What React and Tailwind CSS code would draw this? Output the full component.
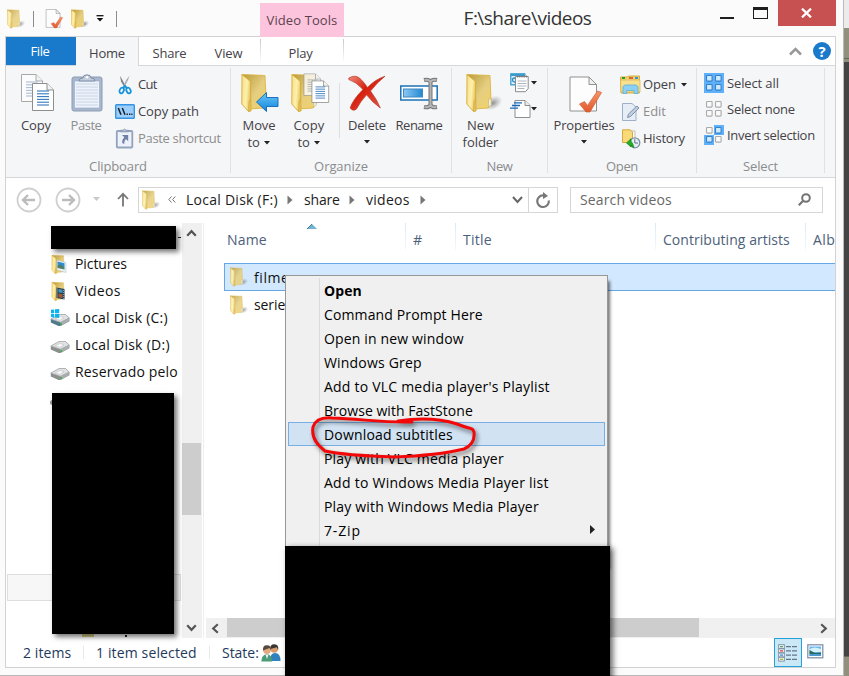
import React, { useLayoutEffect, useRef } from "react";

/* A single line of text whose tracking is adjusted to fill a given width. */
function Text({ w, className = "", children }) {
  const ref = useRef(null);
  useLayoutEffect(() => {
    const el = ref.current;
    el.style.letterSpacing = "0px";
    const natural = el.getBoundingClientRect().width;
    el.style.letterSpacing = (w + 0.8 - natural) / String(children).length + "px";
  }, [w, children]);
  return (
    <span ref={ref} className={"inline-block whitespace-pre " + className}>
      {children}
    </span>
  );
}

function Defs() {
  return (
    <svg className="absolute h-0 w-0">
      <defs>
        <linearGradient id="flap" x1="0" y1="0" x2="1" y2="0.3">
          <stop offset="0" stopColor="#f8df86" />
          <stop offset="0.6" stopColor="#fdf0ae" />
          <stop offset="1" stopColor="#e6c55a" />
        </linearGradient>
        <linearGradient id="back" x1="0" y1="0" x2="1" y2="1">
          <stop offset="0" stopColor="#b99a3c" />
          <stop offset="0.55" stopColor="#e5ce80" />
          <stop offset="1" stopColor="#f5d268" />
        </linearGradient>
        <linearGradient id="blueArrow" x1="0" y1="0" x2="0" y2="1">
          <stop offset="0" stopColor="#6cc8f8" />
          <stop offset="1" stopColor="#1184dc" />
        </linearGradient>
        <linearGradient id="redX" x1="0" y1="0" x2="1" y2="1">
          <stop offset="0" stopColor="#ee8a7c" />
          <stop offset="0.4" stopColor="#d61f0c" />
          <stop offset="1" stopColor="#e0604d" />
        </linearGradient>
        <linearGradient id="orange" x1="0" y1="0" x2="0" y2="1">
          <stop offset="0" stopColor="#f7966c" />
          <stop offset="1" stopColor="#e2592c" />
        </linearGradient>
        <linearGradient id="bar" x1="0" y1="0" x2="1" y2="0">
          <stop offset="0" stopColor="#8cc8f4" />
          <stop offset="1" stopColor="#2489d0" />
        </linearGradient>
        <radialGradient id="shade">
          <stop offset="0" stopColor="#777" stopOpacity="0.8" />
          <stop offset="1" stopColor="#999" stopOpacity="0" />
        </radialGradient>
      </defs>
    </svg>
  );
}

function FolderShape({ shadow = true }) {
  return (
    <>
      {shadow && <ellipse cx="27" cy="30" rx="10" ry="6.5" fill="url(#shade)" transform="rotate(-28 27 30)" />}
      <path d="M1 1.5 L24 2.5 L25.2 31 L22 35 L8 36 Z" fill="url(#back)" stroke="#d9ae35" strokeWidth="0.8" />
      <path d="M22.6 26 h2.6 v6 l-2.6 2.6 z" fill="#e8f2f5" stroke="#c7a64a" strokeWidth="0.5" />
      <path d="M1 1.5 L9.5 8.5 L10 38 L7.5 38.5 L0.8 31 Z" fill="url(#flap)" stroke="#d6aa35" strokeWidth="0.9" />
      <path d="M7.5 38.5 L8.2 28 L10 26" fill="none" stroke="#cda13a" strokeWidth="0.7" />
    </>
  );
}

const BigFolder = () => (
  <svg width="38" height="40" viewBox="0 0 38 40" className="ml-[6px]"><g transform="translate(1 0)"><FolderShape /></g></svg>
);

const SmallFolder = ({ strong = false }) => (
  <svg width="19" height="20" viewBox="0 0 38 40" className={strong ? "" : "opacity-85"}>
    <g transform="translate(0 0)"><FolderShape /></g>
  </svg>
);

function Page({ x = 0, y = 0, s = 1, pale = false }) {
  return (
    <g transform={`translate(${x} ${y}) scale(${s})`} opacity={pale ? 0.75 : 1}>
      <path d="M0.5 0.5 H15 L21.5 7 V27.5 H0.5 Z" fill="#fff" stroke="#8e8e8e" />
      <path d="M15 0.5 V7 H21.5" fill="#f3f3f3" stroke="#8e8e8e" />
      {[8, 10.8, 13.6, 16.4, 19.2, 22].map((l) => (
        <path key={l} d={`M5 ${l} H17`} stroke={pale ? "#91a8c8" : "#3579bd"} strokeWidth="1.1" />
      ))}
    </g>
  );
}

const CopyIcon = () => (
  <svg width="34" height="39" viewBox="0 0 34 39" className="ml-[3px]">
    <Page pale />
    <Page x={11} y={9} />
  </svg>
);

const PasteIcon = () => (
  <svg width="32" height="39" viewBox="0 0 32 39" className="ml-[2px]">
    <rect x="1" y="3" width="30" height="34" rx="2" fill="#a9b7cd" stroke="#8c9db8" />
    <rect x="3.5" y="7" width="25" height="27" fill="#edf3fb" stroke="#98a8c2" strokeWidth="0.6" />
    {[10, 13, 16, 19, 22, 25, 28, 31].map((y) => <path key={y} d={`M5 ${y} H27`} stroke="#c9d4e4" />)}
    <path d="M8 7 Q8 4 12 4 Q12 0.8 16 0.8 Q20 0.8 20 4 Q24 4 24 7 Z" fill="#c3ccda" stroke="#7f90ab" />
    <circle cx="16" cy="3.2" r="1.2" fill="#fff" />
  </svg>
);

const CutIcon = () => (
  <svg width="20" height="20" viewBox="0 0 20 20">
    <path d="M5 0.8 L7.5 5 L11.3 12 L9.8 13 L6 6.5 Z" fill="#7e8790" />
    <path d="M14.5 0.8 L13 5 L9 13 L7.7 12 L11.5 4.5 Z" fill="#a5adb5" />
    <ellipse cx="6.7" cy="15.5" rx="2" ry="2.9" transform="rotate(25 6.7 15.5)" fill="none" stroke="#1593dc" strokeWidth="1.8" />
    <ellipse cx="13.5" cy="15.5" rx="2" ry="2.9" transform="rotate(-25 13.5 15.5)" fill="none" stroke="#1593dc" strokeWidth="1.8" />
    <path d="M8 13.3 L10 10.8 L12.2 13.3" fill="none" stroke="#1593dc" strokeWidth="1.8" />
  </svg>
);

const PathIcon = () => (
  <svg width="20" height="15" viewBox="0 0 20 15">
    <rect x="0.7" y="0.7" width="18.6" height="13.6" rx="0.8" fill="#9bcefb" stroke="#3593e2" strokeWidth="1.4" />
    <path d="M3.3 4 L6 10.8 M7.3 4 L10 10.8" stroke="#17212c" strokeWidth="1.5" />
    <path d="M11.5 10.3 h1.4 M14 10.3 h1.4 M16.3 10.3 h1.2" stroke="#17212c" strokeWidth="1.5" />
  </svg>
);

const ShortcutIcon = () => (
  <svg width="20" height="21" viewBox="0 0 20 21">
    <rect x="1.8" y="3" width="15.5" height="16.5" rx="1" fill="#edf2fa" stroke="#93a3be" strokeWidth="1.8" />
    <path d="M5.5 3.8 V2.3 H8 Q9.5 0 11 2.3 H13.5 V3.8 Z" fill="#c2cada" stroke="#8797b1" />
    <path d="M7 7 H13.2 V13.2 L11 11 Q9 12.5 9.2 16 L7.2 15 Q6.8 11.5 9.3 9.2 Z" fill="#6e80a3" />
  </svg>
);

const MoveIcon = () => (
  <svg width="40" height="40" viewBox="0 0 40 40" className="ml-[2px]">
    <g transform="translate(1 0)"><FolderShape shadow={false} /></g>
    <path d="M16.5 29 L26.5 19.5 V24.5 H38 V33.5 H26.5 V38.5 Z" fill="url(#blueArrow)" stroke="#0f67b5" strokeWidth="0.9" />
  </svg>
);

const CopyToIcon = () => (
  <svg width="40" height="40" viewBox="0 0 40 40" className="ml-[2px]">
    <g transform="translate(1 0)"><FolderShape shadow={false} /></g>
    <Page x={13.5} y={0.5} s={0.8} pale />
    <Page x={21.5} y={7.5} s={0.8} />
  </svg>
);

const DeleteIcon = () => (
  <svg width="38" height="37" viewBox="0 0 38 37">
    <path d="M0.8 3 Q7 -0.5 11.5 3 Q16 7 19.5 12.5 Q27 4.5 37 1.2 Q29 7.5 22.5 16 Q29 24.5 32.3 33 Q24 27 18.5 19.8 Q12 27 8.5 34 Q5 36.8 2.2 33 Q4.5 25 15 14.5 Q8.5 7 0.8 4.5 Z" fill="url(#redX)" stroke="#bd3525" strokeWidth="0.7" />
  </svg>
);

const RenameIcon = () => (
  <svg width="39" height="33" viewBox="0 0 39 33">
    <rect x="0.8" y="9" width="36.4" height="14" fill="#fff" stroke="#1c71b5" strokeWidth="1.5" />
    <rect x="3.5" y="12" width="19" height="8" fill="url(#bar)" stroke="#3d89c8" />
    <path d="M24 3 Q29 2 30.5 5 Q32 2 37 3 M30.5 5 V28 M24 30 Q29 31 30.5 28 Q32 31 37 30" fill="none" stroke="#777" strokeWidth="4" />
    <path d="M24.5 3 Q29 2 30.5 5 Q32 2 36.5 3 M30.5 5 V28 M24.5 30 Q29 31 30.5 28 Q32 31 36.5 30" fill="none" stroke="#b5b5b5" strokeWidth="1.9" />
  </svg>
);

const NewItemIcon = () => (
  <svg width="20" height="20" viewBox="0 0 20 20">
    <rect x="0.8" y="0.8" width="14" height="11" fill="#d7effb" stroke="#3a9cd0" strokeWidth="1.3" />
    <path d="M1 2 H15" stroke="#3a9cd0" strokeWidth="2" />
    <circle cx="4.5" cy="7" r="2" fill="none" stroke="#2d8cc7" strokeWidth="1.3" />
    <path d="M5.5 3.5 H18.2 V15.5 L15.5 18.7 H5.5 Z" fill="#fff" stroke="#8a8a8a" />
    <path d="M7 3.5 H17" stroke="#777" strokeWidth="2.2" strokeDasharray="1.2 1" />
    <path d="M7.5 8 H16.5 M7.5 10.5 H16.5 M7.5 13 H16.5 M7.5 15.5 H14.5" stroke="#a6adb6" strokeWidth="0.9" />
  </svg>
);

const EasyIcon = () => (
  <svg width="21" height="20" viewBox="0 0 21 20">
    <path d="M5 1.5 H15 L20 6.5 V18.5 H5 Z" fill="#fff" stroke="#8e8e8e" />
    <path d="M15 1.5 V6.5 H20" fill="#eee" stroke="#8e8e8e" />
    <path d="M4 3.8 H12 M2 6.5 H10 M0 9.2 H8" stroke="#1268bd" strokeWidth="1.3" />
  </svg>
);

function PropertiesIcon({ width = 34, height = 38, className = "" }) {
  return (
    <svg width={width} height={height} viewBox="0 0 34 38" className={className}>
      <path d="M1 1 H20 L27.5 8.5 V35 H1 Z" fill="#fdfdfd" stroke="#919191" />
      <path d="M20 1 V8.5 H27.5 Z" fill="#eee" stroke="#919191" />
      <path d="M10.5 28 L15.5 25.5 L18.5 29.5 L28.5 15 L32.5 16.5 L21 36 L17 36 Z" fill="url(#orange)" stroke="#cd6037" strokeWidth="0.7" />
    </svg>
  );
}

const OpenIcon = () => (
  <svg width="21" height="20" viewBox="0 0 21 20">
    <path d="M0.5 2 H7 L9 1 H19.5 V18 H1 Z" fill="#f0d36d" stroke="#d5ae3e" />
    <path d="M2 3 H5" stroke="#2d9b33" strokeWidth="2" /><path d="M9 3 H13" stroke="#df6235" strokeWidth="2" /><path d="M15 3 H18" stroke="#2e9adb" strokeWidth="2" />
    <path d="M0.5 5 H20 V17 H1 Z" fill="#f7e08f" stroke="#dcb854" strokeWidth="0.8" />
    <path d="M3 11.5 L5 10 H16 L18 11.5 V18.5 H14.2 V15.5 H6.7 V18.5 H3 Z" fill="#8cd1f3" stroke="#5aaed6" strokeWidth="0.8" />
  </svg>
);

const EditIcon = () => (
  <svg width="20" height="20" viewBox="0 0 20 20">
    <path d="M2.5 1.5 H12 L16 5 V18.5 H2.5 Z" fill="#e6edf7" stroke="#a0afc9" />
    <path d="M7.5 15.5 L8.5 12 L17 4 L19 6 L10.5 14.5 Z" fill="#c2cddd" stroke="#7f91af" />
  </svg>
);

const HistoryIcon = () => (
  <svg width="20" height="20" viewBox="0 0 20 20" className="ml-[1px]">
    <path d="M5 2 H14 V10 H5 Z" fill="#fff" stroke="#bbb" />
    <path d="M1.5 0.8 H9 L11.5 3 V13.5 H1.5 Z" fill="#f9d978" stroke="#d5a93e" />
    <circle cx="13.8" cy="13.8" r="5" fill="#e5edf3" stroke="#7b91a3" strokeWidth="1.3" />
    <path d="M13.8 10.2 V14 H17" fill="none" stroke="#5d7385" />
    <path d="M5.5 14 L10 9.8 V12.2 Q12 14.5 13 18.5 Q10.5 17 10 16 V18 Z" fill="#24ae22" stroke="#12811a" strokeWidth="0.7" />
  </svg>
);

function SelectIcon({ blue }) {
  const cells = [[2, 2], [11, 2], [2, 11], [11, 11]];
  return (
    <svg width="20" height="20" viewBox="0 0 20 20">
      {blue.length === 4 && <rect width="20" height="20" fill="#5fb0fa" />}
      {cells.map(([x, y], i) => {
        const on = blue.includes(i);
        return (
          <g key={i}>
            {on && blue.length < 4 && <rect x={x < 5 ? 0 : 10} y={y < 5 ? 0 : 10} width="10" height="10" fill="#5fb0fa" />}
            <rect x={x + 0.5} y={y + 0.5} width="5.6" height="5.6" rx="0.8" fill={on ? "#cfeaff" : "#fafafa"} stroke={on ? "#3581c8" : "#aaa"} strokeWidth="1.1" />
          </g>
        );
      })}
    </svg>
  );
}

const Caret = ({ className = "" }) => (
  <svg width="6" height="4" viewBox="0 0 6 4" className={className}><path d="M0 0 H6 L3 3.6 Z" fill="#222" /></svg>
);

const Drive = ({ windows }) => (
  <svg width="20" height="18" viewBox="0 0 20 18" className="-ml-px">
    <path d="M0.8 10 L9 5.5 H15.5 L19.3 9 V12.2 L10.5 17 H8.5 L0.8 13.5 Z" fill={windows ? "#50798c" : "#8d8f8f"} />
    <path d="M0.8 10 L9 5.5 H15.5 L19.3 9 L10.5 13.3 Z" fill="#dfe1e2" stroke="#a4a7a8" strokeWidth="0.7" />
    <path d="M5 10 L10 7.5 L14 8.8 L10 11.3 Z" fill="#fafafa" stroke="#bbb" strokeWidth="0.5" />
    <path d="M10.5 13.3 L19.3 9 V12.2 L10.5 17 Z" fill="#a9adae" />
    <path d="M11.2 14.2 v1.7" stroke="#20b52b" strokeWidth="1.5" />
    {windows && <path d="M1 0.8 L4.2 0.4 V4 H1 Z M5 0.3 L9.2 0 V4 H5 Z M1 4.8 H4.2 V8.4 L1 8 Z M5 4.8 H9.2 V9 L5 8.5 Z" fill="#0bb3ef" />}
  </svg>
);

function MediaFolder({ kind }) {
  return (
    <svg width="19" height="20" viewBox="0 0 38 40">
      <g transform="translate(1 1)"><FolderShape shadow={false} /></g>
      {kind === "pictures" ? (
        <g><path d="M12 12 L30 17 V37 L12 32 Z" fill="#e7f4fc" stroke="#b1b8bc" /><path d="M13 15 L27 18.5 V28 L13 25 Z" fill="#2e8ed1" /><path d="M13 24 L20 21 L27 28 V31 L13 28 Z" fill="#557d64" /></g>
      ) : (
        <g><path d="M11 13 L27 16 V37 L11 34 Z" fill="#24415a" /><path d="M15 16 L23 17.5 V24 L15 22.5 Z" fill="#4398bf" /><path d="M15 25 L23 26.5 V34 L15 32.5 Z" fill="#a85b32" /><path d="M13 15 V33 M25 18 V36" stroke="#8e989c" strokeWidth="2" strokeDasharray="2 2" /></g>
      )}
    </svg>
  );
}

const Users = () => (
  <svg width="20" height="18" viewBox="0 0 20 18" className="-ml-px">
    <path d="M9 17 Q9 9 14 9 Q19.5 9 19.5 17 Z" fill="#2f82bd" />
    <circle cx="13.3" cy="5" r="3.7" fill="#d79b6b" />
    <path d="M9.3 5 Q9 0 13.5 0.2 Q18 0.5 17.2 6 L15.8 3.2 Z" fill="#393430" />
    <path d="M0.3 17.5 Q0.5 10.5 6 10 Q11 10.5 11.2 17.5 Z" fill="#4c9c78" />
    <path d="M4.5 10.5 L6 15 L7.5 10.5 Z" fill="#f4f4f4" />
    <circle cx="6" cy="6.2" r="3.8" fill="#e2ab80" />
    <path d="M2 6.5 Q1.5 1 6 1.2 Q10.5 1.3 10 6.5 L8.5 4 Z" fill="#57493e" />
  </svg>
);

function BigButton({ icon, children, className }) {
  return (
    <div className={"flex shrink-0 flex-col items-center pt-[3px] " + className}>
      <div className="mb-[2px] flex h-[44px] items-center justify-center">{icon}</div>
      {children}
    </div>
  );
}

function SmallButton({ icon, children }) {
  return (
    <div className="flex h-[27px] items-center">
      <div className="flex w-[23px] shrink-0 items-center">{icon}</div>
      {children}
    </div>
  );
}

function Group({ className, label, w, children }) {
  return (
    <section className={"flex h-[105px] shrink-0 flex-col border-r border-[#dfe1e3] " + className}>
      <div className="flex h-[88px] shrink-0">{children}</div>
      <div className="mt-[2px] flex h-[17px] shrink-0 items-center justify-center leading-[17px] text-[#8b8c8e]"><Text w={w}>{label}</Text></div>
    </section>
  );
}

const LINE = "leading-[17px]";

function Ribbon() {
  return (
    <div className="flex h-[112px] shrink-0 border-b border-[#d5d7d9] bg-[#f5f6f7] pt-[2px] text-[13px] text-[#444247]">
      <Group className="w-[225px]" label="Clipboard" w={57}>
        <BigButton className="ml-[4px] w-[52px]" icon={<CopyIcon />}><Text w={29} className={LINE}>Copy</Text></BigButton>
        <BigButton className="w-[48px]" icon={<PasteIcon />}><Text w={30} className={LINE + " text-[#8d8d8f]"}>Paste</Text></BigButton>
        <div className="ml-[5px] flex flex-col pt-[3px]">
          <SmallButton icon={<CutIcon />}><Text w={18}>Cut</Text></SmallButton>
          <SmallButton icon={<PathIcon />}><Text w={60}>Copy path</Text></SmallButton>
          <SmallButton icon={<ShortcutIcon />}><Text w={82} className="text-[#8d8d8f]">Paste shortcut</Text></SmallButton>
        </div>
      </Group>
      <Group className="w-[221px]" label="Organize" w={53}>
        <BigButton className="ml-[3px] w-[50px]" icon={<MoveIcon />}>
          <Text w={32} className={LINE}>Move</Text>
          <div className="flex items-center gap-[5px]"><Text w={11} className={LINE}>to</Text><Caret /></div>
        </BigButton>
        <BigButton className="w-[50px]" icon={<CopyToIcon />}>
          <Text w={30} className={LINE}>Copy</Text>
          <div className="flex items-center gap-[5px]"><Text w={11} className={LINE}>to</Text><Caret /></div>
        </BigButton>
        <div className="mt-[15px] ml-[5px] h-[55px] w-px bg-[#dcdee0]" />
        <BigButton className="ml-[2px] w-[50px]" icon={<DeleteIcon />}>
          <Text w={37} className={LINE}>Delete</Text><Caret className="mt-[6px]" />
        </BigButton>
        <BigButton className="w-[54px]" icon={<RenameIcon />}><Text w={46} className={LINE}>Rename</Text></BigButton>
      </Group>
      <Group className="w-[96px]" label="New" w={25}>
        <BigButton className="ml-[5px] w-[47px]" icon={<BigFolder />}>
          <Text w={26} className={LINE}>New</Text><Text w={35} className={LINE}>folder</Text>
        </BigButton>
        <div className="ml-[6px] flex flex-col gap-[6px] pt-[5px]">
          <div className="flex items-center gap-[2px]"><div className="w-5"><NewItemIcon /></div><Caret className="-ml-px" /></div>
          <div className="flex items-center gap-[2px]"><div className="w-5"><EasyIcon /></div><Caret className="-ml-px" /></div>
        </div>
      </Group>
      <Group className="w-[149px]" label="Open" w={31}>
        <BigButton className="ml-[3px] w-[66px]" icon={<PropertiesIcon className="mt-[3px] ml-[4px]" />}>
          <Text w={60} className={LINE}>Properties</Text><Caret className="mt-[6px]" />
        </BigButton>
        <div className="ml-[3px] flex flex-col pt-[3px]">
          <SmallButton icon={<OpenIcon />}><Text w={32}>Open</Text><Caret className="ml-[5px]" /></SmallButton>
          <SmallButton icon={<EditIcon />}><Text w={22} className="text-[#8d8d8f]">Edit</Text></SmallButton>
          <SmallButton icon={<HistoryIcon />}><Text w={41}>History</Text></SmallButton>
        </div>
      </Group>
      <Group className="w-[128px]" label="Select" w={34}>
        <div className="ml-[7px] flex flex-col gap-[6px] pt-[5px]">
          <div className="flex h-5 items-center gap-[3px]"><SelectIcon blue={[0, 1, 2, 3]} /><Text w={51} className="translate-y-px">Select all</Text></div>
          <div className="flex h-5 items-center gap-[3px]"><SelectIcon blue={[]} /><Text w={67} className="translate-y-px">Select none</Text></div>
          <div className="flex h-5 items-center gap-[3px]"><SelectIcon blue={[1, 2]} /><Text w={87} className="translate-y-px">Invert selection</Text></div>
        </div>
      </Group>
    </div>
  );
}

function TitleBar() {
  return (
    <header className="flex h-[36px] shrink-0 items-start">
      <div className="flex h-[36px] w-[254px] shrink-0 items-center pt-px pl-[1px]">
        <SmallFolder />
        <div className="ml-[7px] h-4 w-px bg-[#8c8c8c]" />
        <div className="ml-[11px]"><PropertiesIcon width={19} height={20} /></div>
        <div className="ml-[7px]"><SmallFolder strong /></div>
        <svg className="ml-[6px]" width="8" height="7" viewBox="0 0 8 7"><path d="M0.5 0.7 H7.5" stroke="#111" strokeWidth="1.3" /><path d="M0.8 3 H7.2 L4 6.5 Z" fill="#111" /></svg>
        <div className="ml-[12px] h-4 w-px bg-[#8c8c8c]" />
      </div>
      <div className="relative z-10 mt-[3px] flex h-[34px] w-[84px] shrink-0 items-center justify-center bg-[#fdc5dd] pt-px text-[13px] text-[#5b424d]"><Text w={70}>Video Tools</Text></div>
      <div className="flex h-[36px] w-[367px] shrink-0 items-center justify-center text-[19px] text-[#333]"><Text w={127}>{"F:\\share\\videos"}</Text></div>
      <div className="ml-[9px] h-[36px] w-[14px] shrink-0"><div className="mt-[17px] h-[2px] bg-[#1e1e1e]" /></div>
      <div className="mt-[7px] ml-[19px] h-[12px] w-[15px] shrink-0 border border-t-[3px] border-[#1e1e1e]" />
      <div className="ml-[10px] flex h-[26px] w-[58px] shrink-0 items-center justify-center bg-[#c75050] pr-[2px]">
        <svg width="11" height="10" viewBox="0 0 11 10"><path d="M1 0.6 L10 9.4 M10 0.6 L1 9.4" stroke="#fff" strokeWidth="2.2" /></svg>
      </div>
    </header>
  );
}

function Tabs() {
  return (
    <div className="flex h-[29px] shrink-0 items-end border-b border-[#d5d7d9] bg-white text-[13px] text-[#444247]">
      <div className="flex h-[28px] w-[70px] items-center justify-center bg-[#1979ca] pt-[2px] pr-[2px] text-white"><Text w={18}>File</Text></div>
      <div className="-mb-px flex h-[29px] w-[63px] items-center justify-center border-r border-[#d5d7d9] bg-[#f5f6f7] pt-[5px]"><Text w={35}>Home</Text></div>
      <div className="flex h-[28px] w-[61px] items-center justify-center pt-[6px]"><Text w={33}>Share</Text></div>
      <div className="flex h-[28px] w-[60px] items-center justify-center pt-[6px] pr-[3px]"><Text w={27}>View</Text></div>
      <div className="flex h-[28px] w-[84px] items-center">
        <div className="h-[24px] w-px bg-gradient-to-b from-[#c9c9c9] to-white" />
        <div className="flex grow justify-center pt-[6px] pr-[3px]"><Text w={23}>Play</Text></div>
        <div className="h-[24px] w-px bg-gradient-to-b from-[#c9c9c9] to-white" />
      </div>
      <div className="flex h-[28px] grow items-center justify-end gap-[11px] pr-[4px]">
        <svg width="13" height="9" viewBox="0 0 13 9"><path d="M1 7.5 L6.5 2 L12 7.5" fill="none" stroke="#999" strokeWidth="2.5" /></svg>
        <div className="flex h-[18px] w-[18px] items-center justify-center rounded-full bg-[#1979ca] text-[15px] font-bold leading-none text-white">?</div>
      </div>
    </div>
  );
}

const Round = ({ flip }) => (
  <svg width="26" height="26" viewBox="0 0 26 26">
    <g transform={flip ? "translate(26 0) scale(-1 1)" : undefined} fill="none">
      <circle cx="13" cy="13" r="11.5" stroke="#cfcfcf" strokeWidth="1.8" />
      <path d="M7 13 H19 M12 8 L7 13 L12 18" stroke="#bcbcbc" strokeWidth="2.4" />
    </g>
  </svg>
);

const Crumb = () => <svg width="6" height="10" viewBox="0 0 6 10"><path d="M0.5 0.5 L5.5 5 L0.5 9.5 Z" fill="#777" /></svg>;

function NavBar() {
  return (
    <div className="flex h-[45px] shrink-0 items-center pb-[2px] text-[14px] text-[#1c1c1c]">
      <div className="ml-[10px] flex w-[122px] items-center">
        <Round />
        <div className="ml-[13px]"><Round flip /></div>
        <svg className="ml-[12px]" width="7" height="5" viewBox="0 0 7 5"><path d="M0 0 H7 L3.5 4 Z" fill="#c9c9c9" /></svg>
        <svg className="ml-[17px]" width="12" height="15" viewBox="0 0 12 15"><path d="M6 14.5 V2 M1 7 L6 1.8 L11 7" fill="none" stroke="#777" strokeWidth="1.8" /></svg>
      </div>
      <div className="flex h-[26px] w-[420px] items-center border border-[#d6d6d6] bg-white">
        <div className="ml-[3px] w-[26px]"><SmallFolder /></div>
        <svg width="8" height="7" viewBox="0 0 8 7"><path d="M3.5 0.5 L0.8 3.5 L3.5 6.5 M7.3 0.5 L4.6 3.5 L7.3 6.5" fill="none" stroke="#777" /></svg>
        <div className="ml-[10px] flex w-[101px] items-center"><Text w={91}>Local Disk (F:)</Text></div>
        <div className="flex w-[17px]"><Crumb /></div>
        <div className="w-[45px]"><Text w={35}>share</Text></div>
        <div className="flex w-[17px]"><Crumb /></div>
        <div className="w-[54px]"><Text w={43}>videos</Text></div>
        <Crumb />
        <div className="flex grow justify-end pr-[5px]"><svg width="11" height="8" viewBox="0 0 11 8"><path d="M1 1 L5.5 6 L10 1" fill="none" stroke="#666" strokeWidth="2" /></svg></div>
        <div className="flex h-full w-[29px] items-center justify-center border-l border-[#d6d6d6]">
          <svg width="16" height="18" viewBox="0 0 16 18"><path d="M8 4.4 A5.8 5.8 0 1 0 13.8 9.5" fill="none" stroke="#777" strokeWidth="2.2" /><path d="M8 1 L13 5 L8 8 Z" fill="#777" /></svg>
        </div>
      </div>
      <div className="ml-[12px] flex h-[26px] w-[253px] items-center justify-between border border-[#d6d6d6] bg-white pr-[11px] pl-[9px] text-[#686868]">
        <Text w={91}>Search videos</Text>
        <svg width="13" height="13" viewBox="0 0 13 13"><circle cx="8" cy="5" r="3.8" fill="none" stroke="#747474" strokeWidth="2" /><path d="M5.2 7.8 L0.8 12.2" stroke="#747474" strokeWidth="2.2" /></svg>
      </div>
    </div>
  );
}

const Chevron = ({ turn }) => (
  <svg width="11" height="11" viewBox="0 0 11 11" className={"shrink-0 " + turn}><path d="M1.2 7.8 L5.5 3.2 L9.8 7.8" fill="none" stroke="#555" strokeWidth="2.2" /></svg>
);

function SidePane() {
  const items = [
    ["Pictures", 51, <MediaFolder kind="pictures" />],
    ["Videos", 45, <MediaFolder kind="videos" />],
    ["Local Disk (C:)", 92, <Drive windows />],
    ["Local Disk (D:)", 94, <Drive />],
    ["Reservado pelo", 102, <Drive />],
  ];
  return (
    <aside className="relative flex h-[415px] w-[198px] shrink-0 border-r border-[#eeeeee]">
      <div className="flex w-[176px] flex-col pt-[27px]">
        {items.map(([name, w, icon]) => (
          <div key={name} className="flex h-[27px] items-center">
            <div className="ml-[45px] w-[24px]">{icon}</div>
            <Text w={w}>{name}</Text>
          </div>
        ))}
        <div className="mt-[189px] ml-px h-[27px] w-[174px] border border-[#dedede] bg-[#f7f7f7]" />
      </div>
      <div className="flex w-[20px] flex-col items-center bg-[#f0f0f0] py-[5px] pr-px">
        <Chevron turn="" />
        <div className="mt-[204px] h-[72px] w-full shrink-0 bg-[#cdcdcd]" />
        <div className="grow" />
        <Chevron turn="rotate-180" />
      </div>
      <div className="absolute top-[14px] left-[172px] h-px w-[3px] bg-[#222]" />
      <div className="absolute top-[177px] left-[44px] h-[5px] w-[4px] rounded-l bg-[#999]" />
      <div className="absolute top-[409px] left-[76px] h-[5px] w-[12px] bg-[#d6cb82]" />
      <div className="absolute top-[412px] left-[119px] h-[2px] w-[2px] bg-[#222]" />
      <div className="absolute top-[3px] left-[45px] h-[23px] w-[125px] bg-black shadow-[3px_3px_5px_rgba(0,0,0,0.55)]" />
      <div className="absolute top-[170px] left-[46px] h-[241px] w-[122px] bg-black shadow-[3px_3px_5px_rgba(0,0,0,0.55)]" />
    </aside>
  );
}

const ColLine = () => <div className="h-[27px] w-px shrink-0 bg-gradient-to-b from-[#d9e8f5] to-[#f4f9fd]" />;

function FilePane() {
  return (
    <main className="flex min-w-0 grow flex-col">
      <div className="relative flex h-[40px] shrink-0 text-[#4c607a]">
        <svg className="absolute top-[1px] left-[103px]" width="10" height="5" viewBox="0 0 10 5"><path d="M0 5 L5 0 L10 5 Z" fill="#73b2d3" /><path d="M0 5 L5 0" stroke="#397f9f" /></svg>
        <div className="w-[201px] shrink-0 pt-[6px] pl-[23px]"><Text w={39}>Name</Text></div>
        <ColLine />
        <div className="w-[49px] shrink-0 pt-[6px] pl-[7px]"><Text w={9}>#</Text></div>
        <ColLine />
        <div className="w-[199px] shrink-0 pt-[6px] pl-[7px]"><Text w={28}>Title</Text></div>
        <ColLine />
        <div className="w-[149px] shrink-0 pt-[6px] pl-[7px]"><Text w={126}>Contributing artists</Text></div>
        <ColLine />
        <div className="shrink-0 pt-[6px] pl-[7px]"><Text w={21.5}>Alb</Text></div>
      </div>
      <div className="ml-[20px] flex h-[28px] shrink-0 items-center border border-r-0 border-[#66a7e8] bg-[#d1e8ff] pl-[5px]">
        <div className="w-[24px]"><SmallFolder /></div><Text w={42}>filmes</Text>
      </div>
      <div className="ml-[20px] flex h-[27px] shrink-0 items-center pl-[6px]">
        <div className="w-[24px]"><SmallFolder /></div><Text w={37}>series</Text>
      </div>
      <div className="grow" />
      <div className="ml-[2px] flex h-[20px] shrink-0 items-center bg-[#f0f0f0] pr-[6px] pl-[4px]">
        <div className="w-[17px]"><Chevron turn="-rotate-90" /></div>
        <div className="h-[19px] w-[472px] self-start bg-[#cdcdcd]" />
        <div className="grow" />
        <Chevron turn="rotate-90" />
      </div>
    </main>
  );
}

function StatusBar() {
  return (
    <footer className="flex h-[29px] shrink-0 items-center text-[#1e395b]">
      <div className="w-[77px] pl-[17px]"><Text w={47.5}>2 items</Text></div>
      <div className="h-[13px] w-px bg-[#e8e8e8]" />
      <div className="w-[125px] pl-[12px]"><Text w={100}>1 item selected</Text></div>
      <div className="h-[13px] w-px bg-[#e8e8e8]" />
      <div className="flex grow items-center gap-[3px] pl-[12px]"><Text w={36}>State:</Text><Users /></div>
      <div className="flex h-[29px] w-[28px] items-center justify-center border border-[#26a0da] bg-[#cbe8f6]">
        <svg width="20" height="18" viewBox="0 0 20 18">
          {["#45a067", "#df3b35", "#3684d4", "#a5b927"].map((c, i) => (
            <g key={c}>
              <rect x="0.7" y={0.7 + i * 4.2} width="5.6" height="3.8" fill="#fff" stroke="#7e91a5" />
              <path d={`M2 ${2.7 + i * 4.2} H5`} stroke={c} strokeWidth="1.3" />
              <path d={`M8 ${2.7 + i * 4.2} H13 M14 ${2.7 + i * 4.2} H19`} stroke="#4b5870" />
            </g>
          ))}
        </svg>
      </div>
      <div className="mr-[11px] ml-[5px] -translate-y-px">
        <svg width="17" height="15" viewBox="0 0 17 15"><rect x="0.8" y="0.8" width="15" height="13" fill="#fff" stroke="#8094ab" strokeWidth="1.3" /><rect x="2.5" y="2.5" width="11.6" height="9.5" fill="#68b7ef" /><path d="M3 5 Q7 2 14 5 V8 H3 Z" fill="#d6f1fb" /><path d="M2.5 6 L8 9 L14 8.5 V10 H2.5 Z" fill="#286c5b" /><path d="M2.5 10 H14 V12 H2.5 Z" fill="#4a98d1" /></svg>
      </div>
    </footer>
  );
}

const MENU = [
  ["Open", 37], ["Command Prompt Here", 158], ["Open in new window", 139], ["Windows Grep", 97],
  ["Add to VLC media player's Playlist", 225], ["Browse with FastStone", 148], ["Download subtitles", 128],
  ["Play with VLC media player", 179], ["Add to Windows Media Player list", 224],
  ["Play with Windows Media Player", 214], ["7-Zip", 36],
];

function ContextMenu() {
  return (
    <div className="absolute top-[275px] left-[285px] h-[290px] w-[323px] border border-[#979797] bg-[#f0f0f0] p-[2px] text-black shadow-[3px_5px_3px_-1px_rgba(0,0,0,0.55)]">
      <div className="absolute top-[2px] left-[33px] h-[280px] w-px bg-[#dadada]" />
      {MENU.map(([name, w]) => (
        <div
          key={name}
          className={
            "relative flex h-[24px] items-center justify-between border pr-[9px] pl-[35px] " +
            (name === "Download subtitles" ? "border-[#78aee5] bg-[#d1e2f2]" : "border-transparent")
          }
        >
          <Text w={w} className={name === "Open" ? "font-bold" : ""}>{name}</Text>
          {name === "7-Zip" && <svg className="-translate-y-px" width="5" height="9" viewBox="0 0 5 9"><path d="M0 0 L5 4.5 L0 9 Z" fill="#222" /></svg>}
        </div>
      ))}
    </div>
  );
}

export default function App() {
  return (
    <div className="relative flex h-[676px] w-[849px] overflow-hidden bg-[#fbfbfb] font-['Open_Sans','Noto_Sans',sans-serif] text-[14px] text-[#111]">
      <Defs />
      <div className="flex h-[676px] w-[844px] shrink-0 flex-col border-r border-b border-[#b9b9b9] bg-[#fbfbfb] pl-[5px]">
        <div className="flex w-[832px] flex-col pl-px"><TitleBar /></div>
        <div className="flex h-[632px] w-[831px] flex-col border border-[#d2d2d2] bg-white">
          <Tabs />
          <Ribbon />
          <NavBar />
          <div className="flex h-[415px] shrink-0"><SidePane /><FilePane /></div>
          <StatusBar />
        </div>
      </div>
      <div className="flex grow flex-col bg-[#444]">
        <div className="h-[28px] bg-[#ebebeb]" />
        <div className="h-[31px] border-b border-[#65645a] bg-[#918f7d]" />
        <div className="h-[3px] bg-[#918f7d]" />
        <div className="grow" />
        <div className="h-[20px] border-t border-[#65645a] bg-[#918f7d]" />
      </div>
      <ContextMenu />
      <div className="absolute top-[546px] left-[285px] h-[140px] w-[325px] bg-black shadow-[3px_2px_6px_rgba(0,0,0,0.6)]" />
      <svg className="absolute top-[405px] left-[300px] drop-shadow-[2px_3px_2px_rgba(0,0,0,0.5)]" width="190" height="60" viewBox="300 405 190 60">
        <path d="M412 422 C384 423 362 419 332 418 C320 417 315 421 313 427 C311 439 319 446 325 451 C343 455 365 456 395 457 C422 456 443 454 464 449 C471 446 475 441 474 432 C472 427 472 430 457 424 C438 418 418 418 398 421" fill="none" stroke="#f20808" strokeWidth="3" strokeLinecap="round" strokeLinejoin="round" />
      </svg>
    </div>
  );
}
